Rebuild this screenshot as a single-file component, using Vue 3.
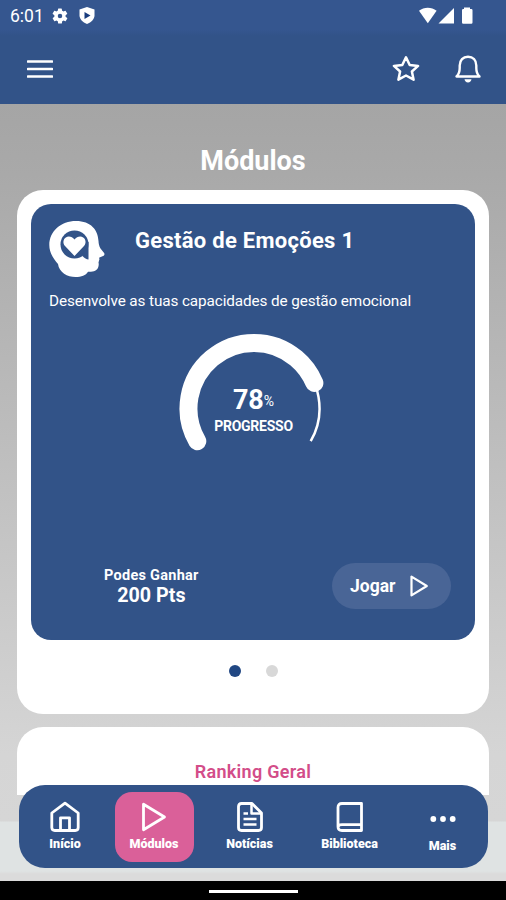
<script setup>
import { ref } from 'vue';

const progress = ref(78);
const points = ref(200);
const activeSlide = ref(0);
const activeTab = ref('modulos');

const tabs = [
  { id: 'inicio', label: 'Início' },
  { id: 'modulos', label: 'Módulos' },
  { id: 'noticias', label: 'Notícias' },
  { id: 'biblioteca', label: 'Biblioteca' },
  { id: 'mais', label: 'Mais' },
];
</script>

<template>
  <div class="screen">
    <header class="top">
      <div class="status">
        <span class="clock">6:01</span>
        <svg class="gear" width="18" height="18" viewBox="0 0 24 24">
          <path fill="#fff" fill-rule="evenodd" d="M19.4 13a7.6 7.6 0 0 0 0-2l2.1-1.6a.5.5 0 0 0 .1-.6l-2-3.5a.5.5 0 0 0-.6-.2l-2.5 1a7.3 7.3 0 0 0-1.7-1l-.4-2.6a.5.5 0 0 0-.5-.4h-4a.5.5 0 0 0-.5.4L9 5.1a7.7 7.7 0 0 0-1.7 1l-2.5-1a.5.5 0 0 0-.6.2l-2 3.5a.5.5 0 0 0 .1.6L4.5 11a8 8 0 0 0 0 2l-2.1 1.6a.5.5 0 0 0-.1.6l2 3.5c.1.2.4.3.6.2l2.5-1a7.3 7.3 0 0 0 1.7 1l.4 2.6c0 .2.2.4.5.4h4c.2 0 .5-.2.5-.4l.4-2.6a7.3 7.3 0 0 0 1.7-1l2.5 1c.2.1.5 0 .6-.2l2-3.5a.5.5 0 0 0-.1-.6zM12 15a3 3 0 1 1 0-6 3 3 0 0 1 0 6z" />
        </svg>
        <svg class="shield" width="18" height="19" viewBox="0 0 18 19">
          <path fill="#fff" d="M9 1l7.500 2.600v5.600c0 4-3.200 7-7.500 8.800-4.300-1.800-7.500-4.800-7.500-8.800V3.600z" />
          <path fill="#183c7e" d="M6.500 5.900l6 3.500-6 3.500z" />
        </svg>
        <svg class="signals" width="56" height="18" viewBox="0 0 56 18">
          <path fill="#fff" d="M1 3.800C6-.2 13.500-.2 18.600 3.800L9.800 16.200z" />
          <path fill="#fff" d="M20.500 16.500L36 1v15.500z" />
          <path fill="#fff" d="M46 2V.5h6V2h1.300q1.200 0 1.200 1.200v12.300q0 1.200-1.200 1.200h-8.100q-1.200 0-1.200-1.200V3.200Q44 2 45.200 2z" />
        </svg>
      </div>
      <div class="toolbar">
        <svg class="menu" width="26" height="20" viewBox="0 0 26 20">
          <path d="M1 2.500h24M1 10h24M1 17.500h24" stroke="#fff" stroke-width="2.600" stroke-linecap="round" />
        </svg>
        <svg class="star" width="30" height="30" viewBox="0 0 30 30">
          <path d="M15 3.300l3.700 7.700 8.400.9-6.200 5.600 1.700 8.200-7.600-4.200-7.600 4.200 1.700-8.200-6.200-5.600 8.400-.9z" fill="none" stroke="#fff" stroke-width="2.500" stroke-linejoin="round" />
        </svg>
        <svg class="bell" width="28" height="30" viewBox="0 0 28 30">
          <path d="M2.500 22.500h23c-2.300-2-3.200-4.500-3.200-8.500v-2.500C22.300 6.300 19 2.700 14 2.700s-8.300 3.600-8.300 8.800V14c0 4-.9 6.500-3.200 8.500z" fill="none" stroke="#fff" stroke-width="2.400" stroke-linejoin="round" />
          <path d="M10.500 25.200h7c-.3 2-1.500 3.200-3.500 3.200s-3.200-1.200-3.500-3.200z" fill="#fff" />
        </svg>
      </div>
    </header>

    <main class="content">
      <h1 class="page-title">Módulos</h1>

      <section class="panel">
        <article class="module">
          <div class="module-head">
            <svg class="head-icon" width="57" height="58" viewBox="0 0 57 58">
              <path fill="#fff" d="M27 1C42 1 49 10 49.500 21c.1 2.500.6 5 2 7.500l3.600 4.500c.8 1.200.2 2.500-1 2.900l-3.600 1.500c-.5.2-.5 1 0 1.500l-1 3.500c.4 1.500.3 3-.2 4.500-1.200 3.500-4.800 5.200-10.300 4.900-2.200 3.700-6.500 5.200-12.500 5.200-8 0-16.500-4.500-17.500-13C4.500 39 .3 32.500.3 25 .5 11 12 1 27 1z" />
              <circle cx="25.500" cy="24.500" r="14" fill="#325388" />
              <path fill="#325388" d="M36.500 22h3v17.500c-2-.3-4-1.300-6-3.500z" />
              <path fill="#fff" d="M25.500 36l-9.500-10c-2.500-2.900-1.800-7 .8-8.600 3-1.700 6.500-.6 8.700 2 2.200-2.600 5.700-3.700 8.700-2 2.600 1.600 3.300 5.700.8 8.600z" />
            </svg>
            <h2 class="module-title">Gestão de Emoções 1</h2>
          </div>
          <p class="module-text">Desenvolve as tuas capacidades de gestão emocional</p>

          <div class="gauge">
            <svg width="152" height="124" viewBox="0 0 152 124">
              <path class="gauge-track" d="M19.300 110.200a65.500 65.500 0 1 1 113.400 0" />
              <path class="gauge-bar" d="M19.300 110.200a65.500 65.500 0 1 1 113.400 0" pathLength="100" :stroke-dasharray="`${progress} 200`" />
            </svg>
            <div class="gauge-label">
              <div class="gauge-value">{{ progress }}<small>%</small></div>
              <div class="gauge-caption">PROGRESSO</div>
            </div>
          </div>

          <div class="module-foot">
            <div class="prize">
              <div class="prize-caption">Podes Ganhar</div>
              <div class="prize-value">{{ points }} Pts</div>
            </div>
            <button class="play">
              <span>Jogar</span>
              <svg width="20" height="24" viewBox="0 0 20 24">
                <path d="M2.500 2.600v18.800L17.800 12z" fill="none" stroke="#fff" stroke-width="2.200" stroke-linejoin="round" />
              </svg>
            </button>
          </div>
        </article>

        <div class="dots">
          <span v-for="n in 2" :key="n" class="dot" :class="{ active: n - 1 === activeSlide }"></span>
        </div>
      </section>

      <section class="ranking">
        <h3 class="ranking-title">Ranking Geral</h3>
      </section>
    </main>

    <nav class="tabs">
      <a v-for="tab in tabs" :key="tab.id" class="tab" :class="[tab.id, { active: tab.id === activeTab }]" @click="activeTab = tab.id">
        <svg width="32" height="32" viewBox="0 0 32 32" fill="none" stroke="#fff" stroke-width="2.800" stroke-linejoin="round">
          <path v-if="tab.id === 'inicio'" d="M2.800 12L16 2.200 29.200 12v14.500q0 3-3 3H5.800q-3 0-3-3zM11.500 29.500V16.800h9v12.700" />
          <path v-else-if="tab.id === 'modulos'" d="M5.500 3.200v25.600L26.500 16z" />
          <template v-else-if="tab.id === 'noticias'">
            <path d="M7.500 2.500H18l9.500 9.500v14.500q0 3-3 3h-17q-3 0-3-3v-21q0-3 3-3z" />
            <path d="M17.500 3v9.500H27M9.500 12.500h4.500M9.500 18h13M9.500 23.500h13" stroke-width="2.500" />
          </template>
          <path v-else-if="tab.id === 'biblioteca'" d="M8 2.500h19.500v27H8q-4 0-4-4v-19q0-4 4-4zM4 26.500q0-2.800 4-2.800h19.500" />
          <g v-else fill="#fff" stroke="none">
            <circle cx="6.300" cy="16" r="2.900" />
            <circle cx="16" cy="16" r="2.900" />
            <circle cx="25.700" cy="16" r="2.900" />
          </g>
        </svg>
        <span>{{ tab.label }}</span>
      </a>
    </nav>

    <footer class="system-bar"><i></i></footer>
  </div>
</template>

<style>
body {
  margin: 0;
}
</style>

<style scoped>
.screen {
  position: relative;
  display: flex;
  flex-direction: column;
  width: 506px;
  height: 900px;
  overflow: hidden;
  font-family: Roboto, sans-serif;
  color: #fff;
  background: #dcdcdc;
}

.top {
  height: 104px;
  background: linear-gradient(#35568f 0, #35568f 30px, #325388 36px);
}

.status {
  display: flex;
  align-items: center;
  height: 32px;
  box-sizing: border-box;
  padding: 0 32px 1px 10px;
}

.clock {
  width: 41px;
  padding-top: 1px;
  font-size: 17.5px;
}

.shield {
  margin-left: 9px;
}

.signals {
  margin-left: auto;
}

.toolbar {
  display: flex;
  align-items: center;
  height: 74px;
  padding: 0 24px 0 27px;
}

.star {
  margin-left: auto;
}

.bell {
  margin-left: 33px;
}

.content {
  flex: 1;
  height: 777px;
  overflow: hidden;
  box-sizing: border-box;
  padding: 0 17px;
  background: linear-gradient(#a5a5a5 0, #a9a9a9 70px, #d5d5d5 650px, #d6d6d6 717px, #dfe3e3 718px, #dfe3e3 767px, #dbdbdb 770px);
}

.page-title {
  height: 86px;
  margin: 0;
  font-size: 27px;
  font-weight: 700;
  line-height: 114px;
  text-align: center;
}

.panel {
  height: 524px;
  box-sizing: border-box;
  padding: 14px;
  border-radius: 26px;
  background: #fff;
}

.module {
  display: flex;
  flex-direction: column;
  height: 436px;
  box-sizing: border-box;
  padding: 16px 24px 31px 18px;
  border-radius: 20px;
  background: #325388;
}

.module-head {
  display: flex;
}

.module-title {
  margin: 6px 0 0 29px;
  font-size: 22px;
  font-weight: 700;
  line-height: 30px;
  letter-spacing: 0.28px;
  white-space: nowrap;
}

.module-text {
  margin: 13px 0 0;
  font-size: 15.3px;
  line-height: 20px;
  letter-spacing: -0.11px;
  white-space: nowrap;
}

.gauge {
  position: relative;
  width: 152px;
  height: 124px;
  margin: 20px 0 0 129px;
}

.gauge path {
  fill: none;
  stroke: #fff;
}

.gauge-track {
  stroke-width: 2.5;
}

.gauge-bar {
  stroke-width: 18;
  stroke-linecap: round;
}

/* figures sit inside the arc */
.gauge-label {
  position: absolute;
  top: 53px;
  left: 0;
  width: 151px;
  text-align: center;
}

.gauge-value {
  font-size: 27px;
  font-weight: 700;
  line-height: 33px;
}

.gauge-value small {
  font-size: 14px;
  font-weight: 400;
  line-height: 1;
  vertical-align: 3px;
}

.gauge-caption {
  font-size: 14px;
  font-weight: 700;
  line-height: 18px;
  letter-spacing: -0.25px;
}

.module-foot {
  display: flex;
  align-items: center;
  justify-content: space-between;
  margin-top: auto;
  padding-left: 55px;
}

.prize {
  text-align: center;
}

.prize-caption {
  font-size: 14.5px;
  font-weight: 700;
  line-height: 18px;
  letter-spacing: 0.27px;
}

.prize-value {
  font-size: 19.7px;
  font-weight: 700;
  line-height: 22px;
}

.play {
  display: flex;
  align-items: center;
  gap: 14px;
  width: 119px;
  height: 46px;
  margin-top: -2px;
  padding: 0 0 0 18px;
  border: 0;
  border-radius: 23px;
  background: #496596;
  color: #fff;
  font-family: inherit;
  font-size: 17.5px;
  font-weight: 700;
}

.dots {
  display: flex;
  justify-content: center;
  gap: 25px;
  padding-top: 25px;
}

.dot {
  width: 12px;
  height: 12px;
  border-radius: 50%;
  background: #d8d8d8;
}

.dot.active {
  background: #214783;
}

.ranking {
  height: 68px;
  margin-top: 13px;
  border-radius: 26px 26px 0 0;
  background: #fff;
}

.ranking-title {
  margin: 0;
  color: #d34d89;
  font-size: 18px;
  font-weight: 600;
  line-height: 89px;
  letter-spacing: 0.3px;
  text-align: center;
}

/* floating navigation over the scrolling content */
.tabs {
  position: absolute;
  top: 785px;
  left: 19px;
  display: grid;
  grid-template-columns: 92px 86px 105px 95px 91px;
  justify-items: center;
  width: 469px;
  height: 83px;
  box-sizing: border-box;
  padding-top: 7px;
  border-radius: 26px;
  background: #325388;
}

.tab {
  display: flex;
  flex-direction: column;
  align-items: center;
  width: 79px;
  height: 70px;
  box-sizing: border-box;
  padding-top: 9px;
  border-radius: 17px;
  font-size: 12.5px;
  font-weight: 900;
  line-height: 16px;
  cursor: pointer;
}

.tab span {
  margin-top: 3px;
}

.tab.active {
  background: #da6099;
}

.tab.mais svg {
  margin-top: 2px;
}

.system-bar {
  display: flex;
  justify-content: center;
  height: 19px;
  background: #000;
}

.system-bar i {
  width: 89px;
  height: 3px;
  margin-top: 9px;
  background: #fff;
}
</style>
